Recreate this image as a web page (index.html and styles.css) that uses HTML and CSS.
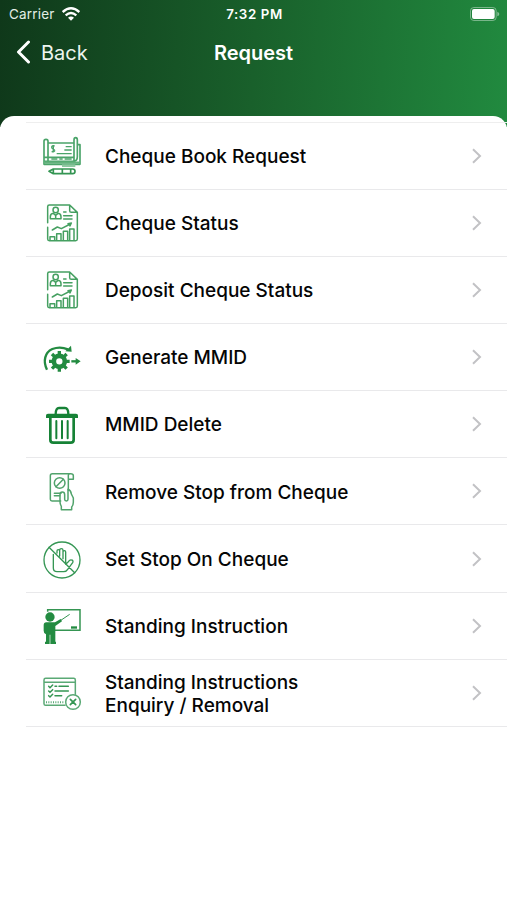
FILE: index.html
```html
<!DOCTYPE html>
<html lang="en">
<head>
<meta charset="utf-8">
<title>Request</title>
<link rel="stylesheet" href="styles.css">
</head>
<body>
<svg class="defs" width="0" height="0">
  <symbol id="chev" viewBox="0 0 12 18"><path d="M2 2.300 9 9 2 15.700" fill="none" stroke="#c2c2c5" stroke-width="2"/></symbol>
  <symbol id="report" viewBox="0 0 192 192">
    <g fill="none" stroke="#45a061" stroke-width="4.500" stroke-linejoin="round" stroke-linecap="round">
      <path d="M53 92V44q0-5 5-5h61l23 22v80q0 5-5 5H58q-5 0-5-5v-35M119 39v17q0 5 5 5h18" />
      <circle cx="77" cy="54" r="8"/><path d="M61 80v-6q0-9 9-10l7 6 7-6q9 1 9 10v6zM77 70v8M101 60h7M101 71h25M101 81h25"/>
      <path d="M67 114l15-9 12 5 27-14M114 95l10-2-4 9M60 145v-11h14v11M80 145v-20h13v20M100 145v-27h13v27M119 145v-34h13v34"/>
    </g>
  </symbol>
</svg>
<header class="header">
  <div class="status">
    <div class="network">
      <span class="carrier">Carrier</span>
      <svg class="wifi" viewBox="0 0 54 42"><g fill="none" stroke="#fff" stroke-width="7"><path d="M2 15Q27-7 52 15M11 25q16-14 32 0"/></g><path d="M18 32q9-7 18 0l-9 9z" fill="#fff"/></svg>
    </div>
    <span class="time">7:32 PM</span>
    <svg class="battery" viewBox="0 0 90 42"><rect x="1.500" y="1.500" width="77" height="39" rx="10" fill="none" stroke="#fff" stroke-opacity=".4" stroke-width="3"/><rect x="6" y="6" width="68" height="30" rx="6" fill="#fff"/><path d="M82 14q6 2 6 7t-6 7z" fill="#fff" fill-opacity=".45"/></svg>
  </div>
  <nav class="nav">
    <svg class="back-icon" viewBox="0 0 15 24"><path d="M12.500 2 2.500 12l10 10" fill="none" stroke="#fff" stroke-width="3" stroke-linecap="round" stroke-linejoin="round"/></svg>
    <span class="back">Back</span>
    <h1 class="title">Request</h1>
  </nav>
</header>
<main class="sheet">
  <ul class="list">
    <li class="row">
      <svg class="icon" viewBox="0 0 192 192"><g fill="none" stroke="#4ba46a" stroke-width="4" stroke-linejoin="round">
        <path d="M42 109V49q0-6 6-6t6 6v60M54 54h77M42 97h90M42 109h90v-64q0-7 5-7t5 7v50q0 12-10 14M142 59h8v59H42v-9" stroke-width="5"/>
        <path d="M42 113h107" stroke-width="7" stroke="#62b17c"/>
        <path d="M74 63q-9-3-9 4 0 4 5 5 5 2 4 6-3 5-9 1M70 60v22M107 65h18M103 75h22M80 86h45M64 102h18M88 102h10M104 102h21"/>
        <path d="M96 122h40" stroke-width="8" stroke="#8fc8a1"/>
        <path d="M57 139l13-7h58q7 0 7 7t-7 7H70zM70 132v14M97 132v14M122 132v14" stroke="#359553" stroke-width="5"/></g></svg>
      <span class="label">Cheque Book Request</span><svg class="chev"><use href="#chev"/></svg>
    </li>
    <li class="row"><svg class="icon"><use href="#report"/></svg><span class="label">Cheque Status</span><svg class="chev"><use href="#chev"/></svg></li>
    <li class="row"><svg class="icon"><use href="#report"/></svg><span class="label">Deposit Cheque Status</span><svg class="chev"><use href="#chev"/></svg></li>
    <li class="row">
      <svg class="icon" viewBox="0 0 192 192"><g fill="none" stroke="#238b41">
        <path d="M51 131C38 105 45 79 67 69q23-9 47 1" stroke-width="7"/>
        <circle cx="88" cy="106" r="16.500" stroke-width="14"/>
        <path d="M88 75v11M88 126v11M57 106h11M108 106h11M66 84l8 8M102 120l8 8M66 128l8-8M102 92l8-8" stroke-width="10"/>
        <path d="M124 106h17" stroke-width="7"/></g><path d="M123 59l2 18-19-1zM137 96l15 10-15 10z" fill="#238b41"/></svg>
      <span class="label">Generate MMID</span><svg class="chev"><use href="#chev"/></svg>
    </li>
    <li class="row">
      <svg class="icon" viewBox="0 0 192 192"><path d="M48 75v-8q0-5 6-5h84q6 0 6 5v8z" fill="#168236"/><g fill="none" stroke="#168236" stroke-width="6"><path d="M77 64q0-19 10-19h18q10 0 10 19" stroke-width="7"/><path d="M61 74v66q0 9 9 9h52q9 0 9-9V74" stroke-width="8"/><path d="M79 84v52M96 84v52M113 84v52" stroke-linecap="round"/></g></svg>
      <span class="label">MMID Delete</span><svg class="chev"><use href="#chev"/></svg>
    </li>
    <li class="row">
      <svg class="icon" viewBox="0 0 192 192"><g fill="none" stroke="#50a36b" stroke-width="4.500" stroke-linejoin="round" stroke-linecap="round">
        <path d="M92 123H66q-5 0-5-5V47q0-6 6-6h55q8 0 8 6v11h-15V46q0-5 5-5M115 58v32"/><circle cx="89" cy="69" r="16"/><path d="M78 80l22-22M73 100h20M73 107h16"/>
        <path d="M94 149v-10q-4-6-4-14v-21q0-8 7-8t7 8v14q0 5 5 5t5-5V88q9 3 10 14l6 12v13q0 9-5 14v8z"/></g></svg>
      <span class="label">Remove Stop from Cheque</span><svg class="chev"><use href="#chev"/></svg>
    </li>
    <li class="row">
      <svg class="icon" viewBox="0 0 192 192"><g fill="none" stroke="#359654" stroke-width="4" stroke-linejoin="round" stroke-linecap="round">
        <circle cx="96" cy="96" r="54"/><path d="M57 58l77 76M70 79v41q0 11 11 11h20q8 0 12-7l15-20q3-6-3-8-5-2-10 5l-8 8V72q0-4-4-4t-4 4v20M99 89V67q0-5-5-5t-5 5v17M89 80V69q0-4-4-4t-4 4v6"/></g></svg>
      <span class="label">Set Stop On Cheque</span><svg class="chev"><use href="#chev"/></svg>
    </li>
    <li class="row">
      <svg class="icon" viewBox="0 0 192 192"><g fill="none" stroke="#359552" stroke-width="4.500"><path d="M53 50v-6h97v62H74"/><path d="M91 77l28-19" stroke-width="3"/></g><path d="M123 94h18v7h-18z" fill="#238b41"/><g fill="#238b41"><circle cx="60" cy="66" r="14"/><path d="M41 91q0-9 8-9h26l17-10 4 7-20 14v47h2v7H61v-28h-2v28H45v-7h3v-22q-7-3-7-11z"/></g></svg>
      <span class="label">Standing Instruction</span><svg class="chev"><use href="#chev"/></svg>
    </li>
    <li class="row">
      <svg class="icon" viewBox="0 0 192 192"><g fill="none" stroke="#5aa975" stroke-width="4.500" stroke-linejoin="round" stroke-linecap="round">
        <path d="M105 130H47q-5 0-5-5V54q0-5 5-5h84q5 0 5 5v43M43 61h92" /><path d="M48 121h56" stroke-width="6" stroke-dasharray="3 4" stroke-linecap="butt"/>
        <path d="M56 73l4 4 8-8M56 87l4 4 8-8M56 101l4 4 8-8M75 73h5M87 73h28M75 87h40M75 101h20" stroke="#359653"/>
        <circle cx="129" cy="120" r="22"/><path d="M121 112l16 16M137 112l-16 16" stroke="#359653" stroke-width="5"/></g></svg>
      <span class="label">Standing Instructions<br>Enquiry / Removal</span><svg class="chev"><use href="#chev"/></svg>
    </li>
  </ul>
</main>
</body>
</html>
```
FILE: styles.css
```css
* { box-sizing: border-box; }
body {
  margin: 0;
  width: 507px;
  height: 900px;
  overflow: hidden;
  background: #fff;
  color: #050505;
  font-family: Inter, "Liberation Sans", sans-serif;
}
.defs { position: absolute; }
.header {
  height: 127px;
  background: linear-gradient(94deg, #0f381a 0%, #19602b 50%, #218a3f 100%);
  color: #fff;
}
.status {
  display: grid;
  grid-template-columns: 1fr auto 1fr;
  align-items: center;
  height: 27px;
  padding: 0 7px 0 9px;
  line-height: 16px;
}
.network { display: flex; align-items: center; gap: 7px; }
.carrier { padding-top: 1px; font-size: 13.5px; letter-spacing: .2px; color: #e3eee5; }
.wifi { width: 18px; height: 14px; }
.time {
  padding-top: 1px;
  font-weight: 600;
  font-size: 13.3px;
  letter-spacing: .6px;
  white-space: nowrap;
}
.battery { justify-self: end; width: 30px; height: 14px; }
.nav {
  display: grid;
  grid-template-columns: 15px 1fr auto 1fr 15px;
  align-items: center;
  height: 50px;
  padding: 0 16px;
}
.back-icon { width: 15px; height: 24px; }
.back { padding: 1px 0 0 10px; font-size: 20px; color: #edf5ef; }
.title { margin: 0; padding-top: 1px; font-size: 20px; font-weight: 600; }
.sheet {
  height: 785px;
  margin-top: -11.5px;
  padding: 6px 0 0 26px;
  border-radius: 14px 14px 0 0;
  background: #fff;
}
.list { margin: 0; padding: 0; list-style: none; border-top: 1.500px solid #eee; }
.row {
  display: flex;
  align-items: center;
  height: 67.170px;
  padding: 0 24px 0 4px;
  border-bottom: 1.500px solid #e9e9eb;
}
.icon { flex: none; width: 64px; height: 64px; margin-top: 2px; }
.label {
  flex: 1;
  margin-left: 11px;
  padding-top: 1.500px;
  font-size: 19px;
  font-weight: 500;
  line-height: 23px;
  white-space: nowrap;
}
.chev { flex: none; width: 12px; height: 18px; }
```
